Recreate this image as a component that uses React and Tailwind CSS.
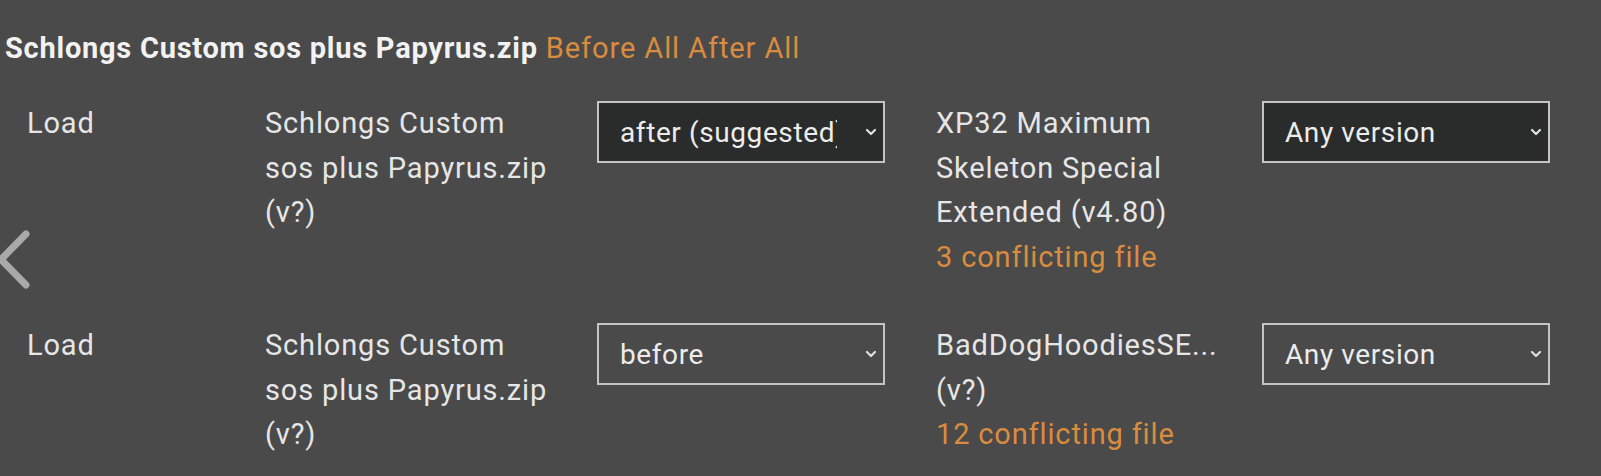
import React from 'react';

const rows = [
  {
    action: 'after (suggested)',
    dark: true,
    other: ['XP32 Maximum', 'Skeleton Special', 'Extended (v4.80)'],
    conflicts: '3 conflicting file',
  },
  {
    action: 'before',
    dark: false,
    other: ['BadDogHoodiesSE...', '(v?)'],
    conflicts: '12 conflicting file',
  },
];

const modLines = ['Schlongs Custom', 'sos plus Papyrus.zip', '(v?)'];

const Chevron = () => (
  <svg width="12" height="8" viewBox="0 0 12 8" className="shrink-0">
    <polyline points="2,2 6,6 10,2" fill="none" stroke="#e0e0e0" strokeWidth="2.2" strokeLinecap="round" strokeLinejoin="round" />
  </svg>
);

const FakeSelect = ({ value, dark }) => (
  <div className={`flex items-center h-[62px] w-[288px] border-2 border-[#c4c4c4] pl-[21px] pr-[6px] text-[28px] tracking-[0.6px] ${dark ? 'bg-[#2a2c2b]' : ''}`}>
    <span className="w-[217px] pt-[3px] overflow-hidden whitespace-nowrap text-[#ececec]">{value}</span>
    <span className="ml-auto flex items-center"><Chevron /></span>
  </div>
);

export default function App() {
  return (
    <div className="relative w-[1601px] h-[476px] bg-[#4a4a4a] overflow-hidden text-[29px] leading-[44.5px] tracking-[0.85px] text-[#e6e6e6]" style={{ fontFamily: 'Roboto, "Noto Sans", sans-serif' }}>
      <div className="pt-[28px] pl-[5px] whitespace-nowrap leading-[41px] tracking-[0.75px]">
        <span className="font-bold text-[#f2f2f2]">Schlongs Custom sos plus Papyrus.zip</span>{' '}
        <span className="text-[#d98c3f] tracking-[0.9px]">Before All After All</span>
      </div>

      <div className="flex flex-col gap-[44px] pl-[27px] pt-[32px]">
        {rows.map((r, i) => (
          <div key={i} className="grid grid-cols-[238px_332px_339px_326px_288px] items-start">
            <div>Load</div>
            <div className="whitespace-nowrap">
              {modLines.map((l, j) => (
                <div key={j}>{l}</div>
              ))}
            </div>
            <FakeSelect value={r.action} dark={r.dark} />
            <div className="whitespace-nowrap">
              {r.other.map((l, j) => (
                <div key={j}>{l}</div>
              ))}
              <div className="text-[#d98c3f]">{r.conflicts}</div>
            </div>
            <FakeSelect value="Any version" dark={r.dark} />
          </div>
        ))}
      </div>

      <svg className="absolute left-0 top-[230px]" width="32" height="60" viewBox="0 0 32 60">
        <polyline points="26,4 1,29.5 26,55" fill="none" stroke="#a9a9a9" strokeWidth="7" strokeLinecap="round" strokeLinejoin="round" />
      </svg>
    </div>
  );
}
